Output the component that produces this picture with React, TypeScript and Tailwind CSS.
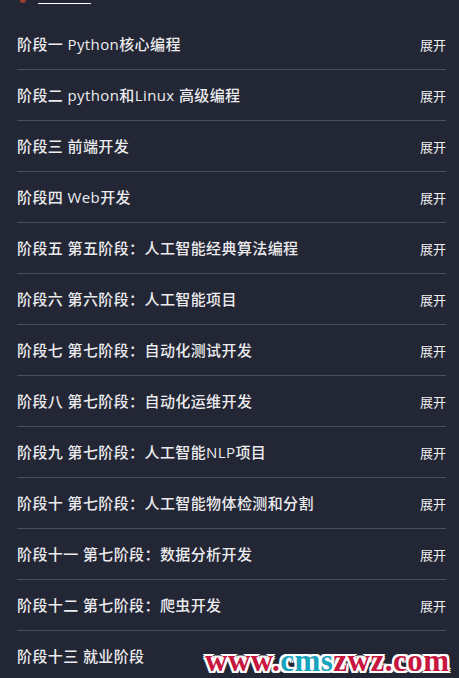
const stages = [
  "阶段一 Python核心编程",
  "阶段二 python和Linux 高级编程",
  "阶段三 前端开发",
  "阶段四 Web开发",
  "阶段五 第五阶段：人工智能经典算法编程",
  "阶段六 第六阶段：人工智能项目",
  "阶段七 第七阶段：自动化测试开发",
  "阶段八 第七阶段：自动化运维开发",
  "阶段九 第七阶段：人工智能NLP项目",
  "阶段十 第七阶段：人工智能物体检测和分割",
  "阶段十一 第七阶段：数据分析开发",
  "阶段十二 第七阶段：爬虫开发",
  "阶段十三 就业阶段",
];

const font = "font-['Open_Sans','Noto_Sans_CJK_SC',sans-serif]";

export default function App() {
  return (
    <div className={`relative h-[678px] w-full overflow-hidden bg-[#232635] ${font}`}>
      {/* bottom edge of the link above, mostly scrolled out of view */}
      <div className="flex h-[19px] items-start gap-[12px] pl-[20px]">
        <span className="h-[3px] w-[6px] rounded-b-sm bg-[#9c3f2e]" />
        <span className="mt-[1px] h-[3px] w-[53px] border-b border-white" />
      </div>

      <div className="px-[17px] pr-[13px]">
        {stages.map((s, i) => (
          <div
            key={i}
            className="flex h-[51px] items-center justify-between border-b border-[#4b4e5b]"
          >
            <span className="text-[15px] font-medium tracking-[0.4px] text-[#ececee]">{s}</span>
            {i < stages.length - 1 && (
              <span className="mt-[3px] text-[13px] text-[#f0f0f2]">展开</span>
            )}
          </div>
        ))}
      </div>

      {/* watermark overlay */}
      <div className="absolute left-[205px] top-[645px] font-['Liberation_Serif',serif] text-[31px] font-bold leading-[32px] tracking-[0.5px] [text-shadow:2px_0_0_#fff,-2px_0_0_#fff,0_2px_0_#fff,0_-2px_0_#fff,2px_2px_0_#fff,-2px_-2px_0_#fff,2px_-2px_0_#fff,-2px_2px_0_#fff]">
        <span className="text-[#c8173f]">www.</span>
        <span className="text-[#1aa3bd]">cms</span>
        <span className="text-[#c8173f]">zwz.com</span>
      </div>
    </div>
  );
}
